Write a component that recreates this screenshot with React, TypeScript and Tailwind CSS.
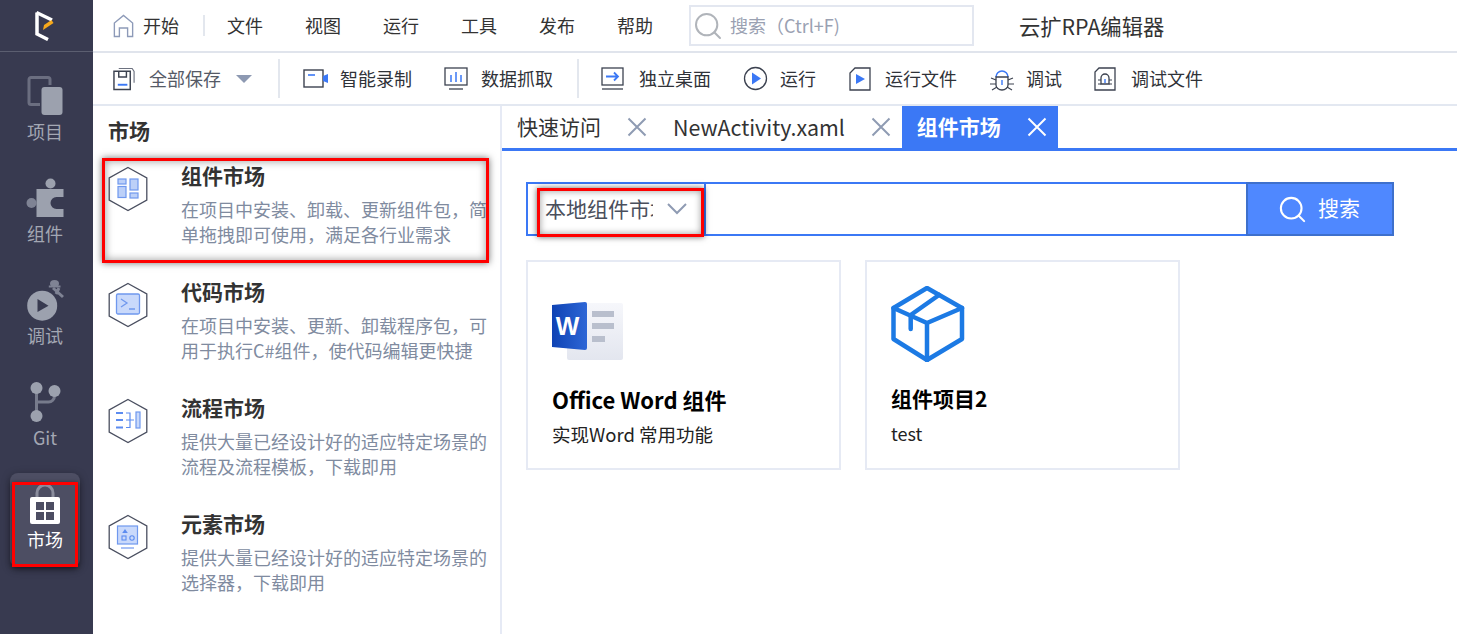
import React from 'react';
import { Search } from 'lucide-react';

const font = "font-['Microsoft_YaHei','Noto_Sans_CJK_SC','Noto_Sans',sans-serif]";

const Hexagon: React.FC<{ children: React.ReactNode }> = ({ children }) => (
  <svg width="40" height="46" viewBox="0 0 40 46" fill="none" className="shrink-0">
    <path d="M20 1.5 38.8 12v22L20 44.500 1.200 34V12z" stroke="#4a4f60" strokeWidth="1.300" />
    {children}
  </svg>
);

const CloseIcon: React.FC<{ className: string }> = ({ className }) => (
  <svg width="20" height="20" viewBox="0 0 20 20" fill="none" stroke="currentColor" strokeWidth="2" className={`shrink-0 ${className}`}>
    <path d="M1.500 1.500 18.500 18.500M18.500 1.500 1.500 18.500" />
  </svg>
);

const markets = [
  {
    title: '组件市场',
    lines: ['在项目中安装、卸载、更新组件包，简', '单拖拽即可使用，满足各行业需求'],
    icon: (
      <>
        <rect x="10" y="13" width="8" height="5" fill="#bcd0f8" stroke="#6f98ee" strokeWidth="1.200" />
        <rect x="10" y="20.500" width="8" height="11" fill="#bcd0f8" stroke="#6f98ee" strokeWidth="1.200" />
        <rect x="22" y="13" width="8" height="11" fill="#bcd0f8" stroke="#6f98ee" strokeWidth="1.200" />
        <rect x="22" y="27" width="8" height="5" fill="#bcd0f8" stroke="#6f98ee" strokeWidth="1.200" />
      </>
    ),
  },
  {
    title: '代码市场',
    lines: ['在项目中安装、更新、卸载程序包，可', '用于执行C#组件，使代码编辑更快捷'],
    icon: (
      <>
        <rect x="8.500" y="12" width="23" height="20" rx="1.500" fill="#c9d9fb" stroke="#6f98ee" strokeWidth="1.300" />
        <path d="m13 17 6 4-6 4M21 27h6" stroke="#6f98ee" strokeWidth="1.300" />
      </>
    ),
  },
  {
    title: '流程市场',
    lines: ['提供大量已经设计好的适应特定场景的', '流程及流程模板，下载即用'],
    icon: (
      <>
        <path d="M8 15h7M8 22h7M8 29.500h7" stroke="#5c8cf0" strokeWidth="2" />
        <path d="M18 15h4v14.500h-4M18 22h8" stroke="#5c8cf0" strokeWidth="1.200" />
        <rect x="28" y="14" width="4" height="16" fill="#c9d9fb" stroke="#6f98ee" strokeWidth="1.200" />
      </>
    ),
  },
  {
    title: '元素市场',
    lines: ['提供大量已经设计好的适应特定场景的', '选择器，下载即用'],
    icon: (
      <>
        <rect x="9.500" y="12" width="20" height="18" fill="#c9d9fb" stroke="#6f98ee" strokeWidth="1.200" />
        <path d="m17 15 2.800 4h-5.600z" fill="#5c8cf0" />
        <rect x="14" y="22" width="4" height="4" stroke="#5c8cf0" strokeWidth="1.100" />
        <circle cx="24" cy="24" r="2.200" stroke="#5c8cf0" strokeWidth="1.100" />
        <path d="M13 34h13" stroke="#6f98ee" strokeWidth="1.200" />
      </>
    ),
  },
];

const SideItem: React.FC<{ label: string; icon: React.ReactNode; className: string }> = ({ label, icon, className }) => (
  <div className={`flex flex-col items-center ${className}`}>
    <div className="h-[43px] w-[44px]">{icon}</div>
    <span className="pr-[3px] text-[18px] leading-[24px] text-[#a3a7b3]">{label}</span>
  </div>
);

const ToolItem: React.FC<{ label: string; icon: React.ReactNode; className: string; labelClass: string }> = ({ label, icon, className, labelClass }) => (
  <div className={`flex shrink-0 items-center ${className}`}>
    {icon}
    <span className={`text-[18px] text-[#2f3238] ${labelClass}`}>{label}</span>
  </div>
);

const Divider: React.FC<{ className: string }> = ({ className }) => <div className={`w-[2px] bg-[#e3e7ee] ${className}`} />;

const menus = ['文件', '视图', '运行', '工具', '发布', '帮助'];

export default function App() {
  return (
    <div className={`relative flex h-[634px] w-[1457px] overflow-hidden bg-white ${font}`}>
      <aside className="relative w-[93px] shrink-0 bg-[#383a50]">
        <div className="flex h-[52px] items-center justify-center border-b border-[#5b5e70] pr-[3px]">
          <svg width="20" height="31" viewBox="0 0 20 31">
            <path d="M2 2.500v21.500l11 5.500" fill="none" stroke="#fff" strokeWidth="3.500" />
            <path d="M1.500 2.500 17 10" fill="none" stroke="#fff" strokeWidth="3.500" />
            <path d="M8 20 18.500 13 16.500 10 9 15z" fill="#f5a81c" />
          </svg>
        </div>
        <SideItem
          label="项目"
          className="mt-[24px]"
          icon={
            <svg width="44" height="43" viewBox="0 0 44 43">
              <path d="M25 9V3.500a2 2 0 0 0-2-2H6a2 2 0 0 0-2 2v23a2 2 0 0 0 2 2h9" fill="none" stroke="#6b6e80" strokeWidth="3" />
              <rect x="16.500" y="11" width="21" height="28" rx="3" fill="#9ca1ae" />
            </svg>
          }
        />
        <SideItem
          label="组件"
          className="mt-[35px]"
          icon={
            <svg width="44" height="43" viewBox="0 0 44 43">
              <circle cx="25.500" cy="5.500" r="5" fill="#9ca1ae" />
              <circle cx="6.500" cy="25" r="5" fill="#7f8394" />
              <path d="M11.500 11h27v8h-7a6 6 0 0 0 0 12h7v8h-27z" fill="#9ca1ae" />
            </svg>
          }
        />
        <SideItem
          label="调试"
          className="mt-[35px]"
          icon={
            <svg width="44" height="43" viewBox="0 0 44 43">
              <circle cx="17.200" cy="25.700" r="15" fill="#9ca1ae" />
              <path d="M12.500 19 23.500 25.700 12.500 32z" fill="#383a50" />
              <ellipse cx="29.500" cy="3.500" rx="4.500" ry="3.500" fill="#7f8394" />
              <path d="M23.800 6.500H35.500" stroke="#7f8394" strokeWidth="2" />
              <path d="M28 8 38 17M34 8l-3 6" stroke="#7f8394" strokeWidth="3" />
            </svg>
          }
        />
        <SideItem
          label="Git"
          className="mt-[35px]"
          icon={
            <svg width="44" height="43" viewBox="0 0 44 43">
              <path d="M11.500 8v24M11.500 20h12a6 6 0 0 0 6-6v-3" fill="none" stroke="#777b8c" strokeWidth="3" />
              <circle cx="11.500" cy="6" r="6" fill="#9ca1ae" />
              <circle cx="29.500" cy="9" r="6" fill="#9ca1ae" />
              <circle cx="11.500" cy="34" r="6" fill="#9ca1ae" />
            </svg>
          }
        />
        <div className="absolute left-[10px] top-[473px] flex h-[94px] w-[70px] flex-col items-center rounded-[8px] bg-[#4d4e63] shadow-[0_2px_8px_rgba(0,0,0,0.35)]">
          <svg width="32" height="42" viewBox="0 0 32 42" className="mt-[11px]">
            <path d="M8 16V9a8 8 0 0 1 16 0v7" fill="none" stroke="#8b8d9d" strokeWidth="3" />
            <rect x="1" y="13" width="30" height="27" rx="2" fill="#fff" />
            <path d="M7 18h8v8H7zM17 18h8v8h-8zM7 28h8v8H7zM17 28h8v8h-8z" fill="#4d4e63" />
          </svg>
          <span className="mt-[1px] text-[18px] leading-[24px] text-white">市场</span>
        </div>
      </aside>

      <div className="flex min-w-0 flex-1 flex-col">
        <header className="flex h-[53px] shrink-0 items-center border-b-2 border-[#e0e4ec] pl-[20px]">
          <svg width="21" height="24" viewBox="0 0 23 24" fill="none" stroke="#8d9ab8" strokeWidth="1.500" preserveAspectRatio="none">
            <path d="M1.500 22.500V9l10-7.500 10 7.500v13.500h-5.500V14H7v8.500z" />
          </svg>
          <span className="ml-[9px] text-[18px] text-[#333]">开始</span>
          <Divider className="ml-[24px] h-[21px]" />
          <div className="ml-[22px] flex gap-[42px]">
            {menus.map((m) => (
              <span key={m} className="text-[18px] text-[#333]">{m}</span>
            ))}
          </div>
          <div className="ml-[36px] flex h-[41px] w-[285px] items-center border-2 border-[#e3e7f0] pl-[1px]">
            <Search size={32} strokeWidth={1.500} className="shrink-0 text-[#b0b4ba]" />
            <span className="ml-[6px] text-[18px] text-[#9aa1b2]">搜索（Ctrl+F)</span>
          </div>
          <span className="ml-[45px] text-[21.300px] text-[#333]">云扩RPA编辑器</span>
        </header>

        <div className="flex h-[53px] shrink-0 items-center border-b-2 border-[#e3e8f1] pl-[20px]">
          <svg width="23" height="26" viewBox="0 0 24 26" fill="none" className="shrink-0">
            <path d="M1 5h17v19H1z" stroke="#3c4250" strokeWidth="1.500" />
            <path d="M6 5v6h8V5" stroke="#3c4250" strokeWidth="1.500" />
            <path d="M5 19h10" stroke="#3b78f5" strokeWidth="2" />
            <path d="M6 2h14l2 3v12" stroke="#6d7280" strokeWidth="1.200" />
          </svg>
          <span className="ml-[13px] text-[18px] text-[#555a66]">全部保存</span>
          <svg width="16" height="10" viewBox="0 0 16 10" className="ml-[15px]"><path d="M0 1h16L8 9z" fill="#8d99b2" /></svg>
          <Divider className="ml-[26px] h-[39px]" />
          <ToolItem
            className="ml-[23px]"
            label="智能录制"
            labelClass="ml-[11px]"
            icon={
              <svg width="26" height="20" viewBox="0 0 26 20" fill="none">
                <rect x="1" y="1" width="19" height="17" stroke="#3c4250" strokeWidth="1.400" />
                <path d="M5 6h7" stroke="#3b78f5" strokeWidth="1.600" />
                <path d="m20 7 5-2v9l-5-2z" fill="#3b78f5" />
              </svg>
            }
          />
          <ToolItem
            className="ml-[32px]"
            label="数据抓取"
            labelClass="ml-[13px]"
            icon={
              <svg width="24" height="24" viewBox="0 0 24 24" fill="none">
                <rect x="1" y="1" width="22" height="17" stroke="#3c4250" strokeWidth="1.300" />
                <path d="M7 8v7M12 5v10M17 8v7" stroke="#3b78f5" strokeWidth="1.500" />
                <path d="M5 22h14" stroke="#3c4250" strokeWidth="1.300" />
              </svg>
            }
          />
          <Divider className="ml-[24px] h-[39px]" />
          <ToolItem
            className="ml-[22px]"
            label="独立桌面"
            labelClass="ml-[14px]"
            icon={
              <svg width="24" height="24" viewBox="0 0 24 24" fill="none">
                <rect x="1" y="1" width="21" height="17" stroke="#3c4250" strokeWidth="1.300" />
                <path d="M5 9.500h12M13 5.500l4 4-4 4" stroke="#3b78f5" strokeWidth="1.800" />
                <path d="M1 22h21" stroke="#3c4250" strokeWidth="1.300" />
              </svg>
            }
          />
          <ToolItem
            className="ml-[32px]"
            label="运行"
            labelClass="ml-[12px]"
            icon={
              <svg width="25" height="25" viewBox="0 0 25 25" fill="none">
                <circle cx="12.500" cy="12.500" r="11" stroke="#3c4250" strokeWidth="1.300" />
                <path d="M9 6.500 18 12.500 9 18.500z" fill="#3b78f5" />
              </svg>
            }
          />
          <ToolItem
            className="ml-[33px]"
            label="运行文件"
            labelClass="ml-[14px]"
            icon={
              <svg width="22" height="24" viewBox="0 0 22 24" fill="none">
                <path d="M6 1h15v22H1V6z" stroke="#3c4250" strokeWidth="1.300" />
                <path d="M7 7 16 12 7 17z" fill="#3b78f5" />
              </svg>
            }
          />
          <ToolItem
            className="ml-[33px]"
            label="调试"
            labelClass="ml-[12px]"
            icon={
              <svg width="24" height="24" viewBox="0 0 24 24" fill="none">
                <path d="M6 10a6 6 0 0 1 12 0" stroke="#3b78f5" strokeWidth="1.500" />
                <path d="M6 10h12v8a6 5 0 0 1-12 0z" stroke="#3c4250" strokeWidth="1.300" />
                <path d="M12 13v5" stroke="#3b78f5" strokeWidth="1.400" />
                <path d="M1 11l5 2M23 11l-5 2M0 17h6M24 17h-6M2 23l5-3M22 23l-5-3" stroke="#3c4250" strokeWidth="1.200" />
              </svg>
            }
          />
          <ToolItem
            className="ml-[32px]"
            label="调试文件"
            labelClass="ml-[15px]"
            icon={
              <svg width="22" height="24" viewBox="0 0 22 24" fill="none">
                <path d="M5 1h16v22H1V5z" stroke="#3c4250" strokeWidth="1.300" />
                <path d="M7 11a4 4 0 0 1 8 0v6H7z" stroke="#3c4250" strokeWidth="1.300" />
                <path d="M11 12v4" stroke="#3b78f5" strokeWidth="1.400" />
                <path d="M4 13h3M15 13h3M4 17h3M15 17h3" stroke="#3c4250" strokeWidth="1.100" />
              </svg>
            }
          />
        </div>

        <div className="flex min-h-0 flex-1">
          <section className="relative w-[409px] shrink-0 border-r-2 border-[#e6eaf5] pl-[15px]">
            <h2 className="pt-[10px] text-[21px] leading-[28px] font-bold text-[#333]">市场</h2>
            <div className="mt-[18px] flex flex-col gap-[26px]">
              {markets.map((m) => (
                <div key={m.title} className="flex h-[90px]">
                  <div className="pt-[4px]"><Hexagon>{m.icon}</Hexagon></div>
                  <div className="ml-[33px]">
                    <div className="text-[21px] leading-[26px] font-bold text-[#333]">{m.title}</div>
                    <div className="mt-[9px] text-[18px] leading-[25px] whitespace-nowrap text-[#808b9f]">
                      {m.lines.map((line) => <div key={line}>{line}</div>)}
                    </div>
                  </div>
                </div>
              ))}
            </div>
            <div className="absolute left-[9px] top-[52px] h-[105px] w-[387px] border-[3px] border-[#ff0000] shadow-[0_0_7px_rgba(0,0,0,0.55),inset_0_0_8px_rgba(0,0,0,0.4)]" />
          </section>

          <main className="min-w-0 flex-1">
            <div className="flex h-[45px] items-stretch border-b-[3px] border-[#3b78f5] pl-[15px]">
              <div className="flex items-center">
                <span className="text-[21px] text-[#333]">快速访问</span>
                <CloseIcon className="ml-[26px] text-[#8f9bb3]" />
              </div>
              <div className="ml-[26px] flex items-center">
                <span className="text-[21.400px] text-[#333]">NewActivity.xaml</span>
                <CloseIcon className="ml-[26px] text-[#8f9bb3]" />
              </div>
              <div className="ml-[11px] flex w-[156px] items-center bg-[#3b78f5] pl-[15px]">
                <span className="text-[21px] font-bold text-white">组件市场</span>
                <CloseIcon className="ml-[26px] text-white" />
              </div>
            </div>

            <div className="relative ml-[24px] mt-[31px] flex h-[54px] w-[868px] items-stretch">
              <div className="flex w-[180px] items-center border-2 border-[#3b78f5] pl-[17px]">
                <span className="w-[108px] overflow-hidden text-[21px] whitespace-nowrap text-[#4a4f5c]">本地组件市场</span>
                <svg width="20" height="12" viewBox="0 0 20 12" fill="none" stroke="#8f9bb3" strokeWidth="2" className="ml-[14px] shrink-0">
                  <path d="M1 1 10 10 19 1" />
                </svg>
              </div>
              <div className="flex-1 border-y-2 border-[#3b78f5]" />
              <div className="flex w-[148px] items-center justify-center gap-[10px] border-2 border-[#3e70cc] bg-[#4f88ff] pr-[3px]">
                <Search size={31} strokeWidth={1.600} className="text-white" />
                <span className="pb-[2px] text-[21px] text-white">搜索</span>
              </div>
              <div className="absolute left-[11px] top-[6px] h-[49px] w-[167px] border-[3px] border-[#ff0000] shadow-[0_0_6px_rgba(0,0,0,0.6),inset_0_0_7px_rgba(0,0,0,0.4)]" />
            </div>

            <div className="ml-[24px] mt-[24px] flex gap-[24px]">
              <div className="h-[210px] w-[315px] border-2 border-[#e6eaf4] pl-[24px] pt-[40px]">
                <svg width="73" height="60" viewBox="0 0 73 60">
                  <defs>
                    <linearGradient id="wordBlue" x1="0" y1="0" x2="1" y2="0">
                      <stop offset="0" stopColor="#0f43b4" />
                      <stop offset="1" stopColor="#2d66d6" />
                    </linearGradient>
                    <linearGradient id="wordDoc" x1="0" y1="0" x2="0" y2="1">
                      <stop offset="0" stopColor="#f6f7fb" />
                      <stop offset="1" stopColor="#e3e6ef" />
                    </linearGradient>
                  </defs>
                  <rect x="15" y="1" width="56" height="57" rx="2" fill="url(#wordDoc)" />
                  <rect x="40" y="9" width="22" height="6" fill="#b9bfcd" />
                  <rect x="40" y="21" width="22" height="6" fill="#b9bfcd" />
                  <rect x="40" y="34" width="13" height="6" fill="#b9bfcd" />
                  <path d="M0 3 33 0q2 0 2 2v44q0 2-2 2L0 45z" fill="url(#wordBlue)" />
                  <text x="15.500" y="33" textAnchor="middle" fontSize="25" fontWeight="700" fill="#fff" fontFamily="Liberation Sans">W</text>
                </svg>
                <div className="mt-[22px] text-[22px] leading-[30px] font-bold text-black">Office Word 组件</div>
                <div className="mt-[7px] text-[18.500px] leading-[26px] text-[#222]">实现Word 常用功能</div>
              </div>
              <div className="h-[210px] w-[315px] border-2 border-[#e6eaf4] pl-[24px] pt-[24px]">
                <svg width="74" height="76" viewBox="0 0 74 76" fill="none" stroke="#1c7ae4" strokeWidth="4.500" strokeLinejoin="round" strokeLinecap="round">
                  <path d="M36 2 71 22v31L36 74 2.500 53V22z" />
                  <path d="M2.500 22 36 37 71 22M36 37v37" />
                  <path d="M19.700 29 48 9M19.700 29v14" />
                </svg>
                <div className="mt-[21px] text-[21px] leading-[30px] font-bold text-black">组件项目2</div>
                <div className="mt-[7px] text-[18px] leading-[26px] text-[#222]">test</div>
              </div>
            </div>
          </main>
        </div>
      </div>

      <div className="absolute left-[12px] top-[482px] h-[85px] w-[66px] border-[3px] border-[#ff0000] shadow-[0_1px_5px_rgba(0,0,0,0.5)]" />
    </div>
  );
}
